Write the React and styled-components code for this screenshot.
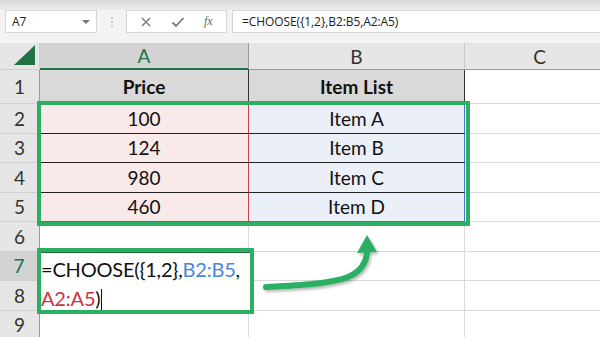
import React from "react";
import styled, { createGlobalStyle } from "styled-components";

const Global = createGlobalStyle`
  html, body { margin: 0; padding: 0; background: #ffffff; }
  #root { width: 600px; height: 337px; overflow: hidden; }
`;

const Page = styled.div`
  position: relative;
  width: 600px;
  height: 337px;
  overflow: hidden;
  background: #f3f3f3;
  font-family: Lato, "Liberation Sans", sans-serif;
`;

const Ribbon = styled.div`
  height: 10px;
  background: linear-gradient(#d8d8d8, #ececec);
`;

const FormulaBar = styled.div`
  display: flex;
  align-items: stretch;
  height: 23px;
  padding: 0 0 0 5px;
  background: #f3f3f3;
`;

const NameBox = styled.div`
  width: 92px;
  box-sizing: border-box;
  background: #fff;
  border: 1px solid #d6d6d6;
  display: flex;
  align-items: center;
  justify-content: space-between;
  padding: 0 6px 0 6px;
  font-family: "Open Sans", "Liberation Sans", sans-serif;
  font-size: 12px;
  color: #222;
`;

const Caret = styled.span`
  width: 0;
  height: 0;
  border-left: 4px solid transparent;
  border-right: 4px solid transparent;
  border-top: 4px solid #777;
`;

const Grip = styled.div`
  width: 29px;
  display: flex;
  flex-direction: column;
  align-items: center;
  justify-content: center;
  gap: 2px;
  & > span { width: 2px; height: 2px; background: #bdbdbd; border-radius: 1px; }
`;

const FxBox = styled.div`
  width: 101px;
  box-sizing: border-box;
  background: #fff;
  border: 1px solid #d6d6d6;
  display: flex;
  align-items: center;
  justify-content: space-around;
  padding: 0 4px;
  color: #7a7a7a;
`;

const FxText = styled.span`
  font-family: "Liberation Serif", serif;
  font-style: italic;
  font-size: 12px;
  color: #666;
`;

const FormulaInput = styled.div`
  flex: 1;
  margin-left: 5px;
  box-sizing: border-box;
  background: #fff;
  border: 1px solid #d6d6d6;
  border-right: none;
  display: flex;
  align-items: center;
  padding-left: 9px;
  font-family: "Open Sans", "Liberation Sans", sans-serif;
  font-size: 12px;
  letter-spacing: -0.1px;
  color: #222;
`;

const Spacer = styled.div`
  height: 10px;
  background: #f3f3f3;
`;

const Sheet = styled.div`
  display: grid;
  grid-template-columns: 40px 209px 216px 150px;
  grid-template-rows: 27px 34px repeat(8, 29.5px);
  background: #fff;
`;

const Corner = styled.div`
  background: #e6e6e6;
  border-right: 1px solid #cfcfcf;
  border-bottom: 1px solid #cfcfcf;
  display: flex;
  align-items: flex-end;
  justify-content: flex-end;
  padding: 0 4px 4px 0;
`;

const ColHead = styled.div`
  background: ${(p) => (p.$active ? "#d3d3d3" : "#e6e6e6")};
  color: ${(p) => (p.$active ? "#217346" : "#333")};
  border-right: 1px solid ${(p) => (p.$active ? "#9a9a9a" : "#c8c8c8")};
  border-bottom: ${(p) => (p.$active ? "2px solid #217346" : "1px solid #9a9a9a")};
  display: flex;
  align-items: center;
  justify-content: center;
  font-size: 19px;
  box-sizing: border-box;
`;

const RowHead = styled.div`
  background: ${(p) => (p.$active ? "#d3d3d3" : "#e6e6e6")};
  color: ${(p) => (p.$active ? "#217346" : "#333")};
  border-bottom: 1px solid #d0d0d0;
  border-right: ${(p) => (p.$active ? "2px solid #217346" : "1px solid #9a9a9a")};
  display: flex;
  align-items: center;
  justify-content: center;
  font-size: 19px;
  box-sizing: border-box;
`;

const Cell = styled.div`
  box-sizing: border-box;
  background: ${(p) => p.$bg || "#fff"};
  border-right: 1px solid ${(p) => p.$rc || "#d9d9d9"};
  border-bottom: 1px solid ${(p) => p.$bc || "#d9d9d9"};
  display: flex;
  align-items: center;
  justify-content: center;
  font-size: 19px;
  font-weight: ${(p) => (p.$bold ? 700 : 400)};
  color: #111;
`;

const Selection = styled.div`
  position: absolute;
  box-sizing: border-box;
  border: 4px solid #2bb062;
  pointer-events: none;
`;

const Editor = styled.div`
  position: absolute;
  left: 37px;
  top: 248px;
  width: 217px;
  height: 66px;
  box-sizing: border-box;
  border: 4px solid #2bb062;
  background: #fff;
  padding: 3px 0 0 0;
  font-size: 20px;
  letter-spacing: -0.2px;
  line-height: 29px;
  color: #111;
  white-space: nowrap;
  &::before {
    content: "";
    position: absolute;
    left: 0; right: 0; top: 0;
    height: 1px;
    background: #1e6b40;
  }
`;

const Ref = styled.span`
  color: ${(p) => p.$c};
`;

const Cursor = styled.span`
  display: inline-block;
  width: 1px;
  height: 21px;
  background: #111;
  vertical-align: -4px;
  margin-left: 1px;
`;

const Arrow = styled.svg`
  position: absolute;
  left: 0;
  top: 0;
  pointer-events: none;
`;

const rows = [
  { n: 1, a: "Price", b: "Item List", header: true },
  { n: 2, a: "100", b: "Item A" },
  { n: 3, a: "124", b: "Item B" },
  { n: 4, a: "980", b: "Item C" },
  { n: 5, a: "460", b: "Item D", last: true },
  { n: 6 },
  { n: 7 },
  { n: 8 },
  { n: 9 },
];

export default function App() {
  return (
    <Page>
      <Global />
      <Ribbon />
      <FormulaBar>
        <NameBox>
          A7
          <Caret />
        </NameBox>
        <Grip>
          <span />
          <span />
          <span />
        </Grip>
        <FxBox>
          <svg width="12" height="12" viewBox="0 0 12 12">
            <path d="M2 2 L10 10 M10 2 L2 10" stroke="#7a7a7a" strokeWidth="1.4" />
          </svg>
          <svg width="14" height="12" viewBox="0 0 14 12">
            <path d="M1.5 6.5 L5 10 L12.5 2" stroke="#7a7a7a" strokeWidth="1.8" fill="none" />
          </svg>
          <FxText>fx</FxText>
        </FxBox>
        <FormulaInput>=CHOOSE({"{"}1,2{"}"},B2:B5,A2:A5)</FormulaInput>
      </FormulaBar>
      <Spacer />
      <Sheet>
        <Corner>
          <svg width="21" height="20" viewBox="0 0 21 20">
            <polygon points="21,0 21,20 0,20" fill="#217346" />
          </svg>
        </Corner>
        <ColHead $active>A</ColHead>
        <ColHead>B</ColHead>
        <ColHead>C</ColHead>
        {rows.map((r) => {
          const inRange = r.n >= 2 && r.n <= 5;
          return (
            <React.Fragment key={r.n}>
              <RowHead $active={r.n === 7}>{r.n}</RowHead>
              <Cell
                $bold={r.header}
                $bg={r.header ? "#d9d9d9" : inRange ? "#f9e9e9" : "#fff"}
                $rc={inRange ? "#c8414b" : r.header ? "#333" : "#d9d9d9"}
                $bc={inRange ? (r.last ? "#c8414b" : "#222") : "#d9d9d9"}
              >
                {r.a}
              </Cell>
              <Cell
                $bold={r.header}
                $bg={r.header ? "#d9d9d9" : inRange ? "#ebeff8" : "#fff"}
                $rc={inRange ? "#4472c4" : r.header ? "#333" : "#d9d9d9"}
                $bc={inRange ? (r.last ? "#4472c4" : "#222") : "#d9d9d9"}
              >
                {r.b}
              </Cell>
              <Cell />
            </React.Fragment>
          );
        })}
      </Sheet>
      <Selection style={{ left: 37, top: 101, width: 433, height: 125 }} />
      <Editor>
        =CHOOSE({"{"}1,2{"}"},<Ref $c="#4a86d8">B2:B5</Ref>,
        <br />
        <Ref $c="#c8343f">A2:A5</Ref>)
        <Cursor />
      </Editor>
      <Arrow width="600" height="337" viewBox="0 0 600 337">
        <defs>
          <filter id="sh" x="-20%" y="-20%" width="140%" height="140%">
            <feDropShadow dx="1.5" dy="2" stdDeviation="1.5" floodColor="#000" floodOpacity="0.3" />
          </filter>
        </defs>
        <g filter="url(#sh)">
          <path
            d="M266 287 C300 285 330 284 348 277 C362 271 367 262 367 250"
            stroke="#2bb062"
            strokeWidth="6"
            fill="none"
            strokeLinecap="round"
          />
          <polygon points="367,235 357,253 377,252" fill="#2bb062" />
        </g>
      </Arrow>
    </Page>
  );
}
